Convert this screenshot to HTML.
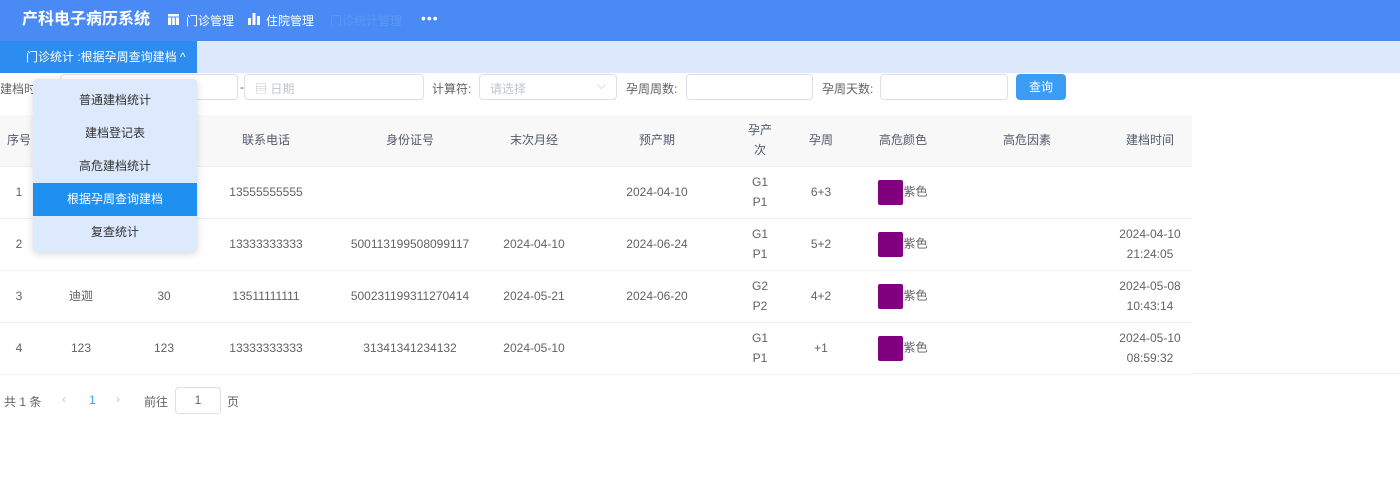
<!DOCTYPE html>
<html><head><meta charset="utf-8"><style>
*{box-sizing:border-box;margin:0;padding:0}
body{width:1400px;height:492px;overflow:hidden;background:#fff;font-family:"Liberation Sans","Noto Sans CJK SC",sans-serif;font-size:12px;color:#606266;position:relative}
.hdr{position:absolute;left:0;top:0;width:1400px;height:41px;background:#4a8af4;color:#fff}
.abs{position:absolute}
.tabs{position:absolute;left:0;top:41px;width:1400px;height:32px;background:#dce8fc}
.tab{position:absolute;left:0;top:0;width:197px;height:32px;background:#2d8cf0;color:#fff;font-size:12px;line-height:32px;padding-left:26px}
.inp{position:absolute;height:26px;border:1px solid #dcdfe6;border-radius:4px;background:#fff;top:74px}
.lbl{position:absolute;top:80px;font-size:12px;color:#606266}
table{position:absolute;left:0;top:115px;border-collapse:collapse;table-layout:fixed;width:1192px}
th{height:51px;background:#f8f8f9;font-weight:normal;color:#515a6e;font-size:12px;text-align:center;border-bottom:1px solid #ebeef5;line-height:20px}
td{height:52px;text-align:center;border-bottom:1px solid #ebeef5;font-size:12px;color:#606266;line-height:20px}
.sw{display:inline-block;width:25px;height:25px;background:#800080;border-radius:2px;vertical-align:middle}
.dd{position:absolute;left:33px;top:79px;width:164px;height:173px;background:#dde9fc;border-radius:4px;box-shadow:0 2px 8px rgba(0,0,0,.15);padding-top:5px}
.dd div{height:33px;line-height:33px;text-align:center;color:#333;font-size:12px}
.dd .on{background:#1e90f0;color:#fff}
</style></head><body>
<div class="hdr">
 <div class="abs" style="left:22px;top:10px;font-size:16px;font-weight:bold;line-height:20px">产科电子病历系统</div>
 <svg class="abs" style="left:168px;top:14px" width="11" height="11"><rect width="11" height="11" fill="#fff"/><rect x="3.2" y="3" width="1" height="8" fill="#4a8af4"/><rect x="6.8" y="3" width="1" height="8" fill="#4a8af4"/><rect x="0" y="2.5" width="11" height="1" fill="#4a8af4"/></svg>
 <div class="abs" style="left:186px;top:12px;font-size:12px">门诊管理</div>
 <svg class="abs" style="left:248px;top:12px" width="12" height="13"><rect x="0" y="6" width="3" height="7" fill="#fff"/><rect x="4.5" y="1" width="3" height="12" fill="#fff"/><rect x="9" y="4" width="3" height="9" fill="#fff"/></svg>
 <div class="abs" style="left:266px;top:12px;font-size:12px">住院管理</div>
 <div class="abs" style="left:330px;top:12px;font-size:12px;color:#5b98f6">门诊统计管理</div>
 <div class="abs" style="left:421px;top:10px;font-size:14px;letter-spacing:1px">•••</div>
</div>
<div class="tabs"><div class="tab">门诊统计 :根据孕周查询建档 ^</div></div>
<div class="lbl" style="left:0">建档时间</div>
<div class="inp" style="left:60px;width:178px"></div>
<div class="lbl" style="left:240px">-</div>
<div class="inp" style="left:244px;width:180px"><span style="position:absolute;left:10px;top:5px;color:#c0c4cc">▤ 日期</span></div>
<div class="lbl" style="left:432px">计算符:</div>
<div class="inp" style="left:479px;width:138px"><span style="position:absolute;left:10px;top:5px;color:#c0c4cc">请选择</span><span style="position:absolute;right:10px;top:3px;color:#c0c4cc">⌵</span></div>
<div class="lbl" style="left:626px">孕周周数:</div>
<div class="inp" style="left:686px;width:127px"></div>
<div class="lbl" style="left:822px">孕周天数:</div>
<div class="inp" style="left:880px;width:128px"></div>
<div class="abs" style="left:1016px;top:74px;width:50px;height:26px;background:#3a9cf4;border-radius:4px;color:#fff;line-height:26px;text-align:center">查询</div>
<table>
<colgroup><col style="width:38px"><col style="width:86px"><col style="width:80px"><col style="width:124px"><col style="width:164px"><col style="width:84px"><col style="width:162px"><col style="width:44px"><col style="width:78px"><col style="width:86px"><col style="width:162px"><col style="width:84px"></colgroup>
<tr><th>序号</th><th>姓名</th><th>年龄</th><th>联系电话</th><th>身份证号</th><th>末次月经</th><th>预产期</th><th>孕产<br>次</th><th>孕周</th><th>高危颜色</th><th>高危因素</th><th>建档时间</th></tr>
<tr><td>1</td><td></td><td></td><td>13555555555</td><td></td><td></td><td>2024-04-10</td><td>G1<br>P1</td><td>6+3</td><td><span class="sw"></span>紫色</td><td></td><td></td></tr>
<tr><td>2</td><td></td><td></td><td>13333333333</td><td>500113199508099117</td><td>2024-04-10</td><td>2024-06-24</td><td>G1<br>P1</td><td>5+2</td><td><span class="sw"></span>紫色</td><td></td><td>2024-04-10<br>21:24:05</td></tr>
<tr><td>3</td><td>迪迦</td><td>30</td><td>13511111111</td><td>500231199311270414</td><td>2024-05-21</td><td>2024-06-20</td><td>G2<br>P2</td><td>4+2</td><td><span class="sw"></span>紫色</td><td></td><td>2024-05-08<br>10:43:14</td></tr>
<tr><td>4</td><td>123</td><td>123</td><td>13333333333</td><td>31341341234132</td><td>2024-05-10</td><td></td><td>G1<br>P1</td><td>+1</td><td><span class="sw"></span>紫色</td><td></td><td>2024-05-10<br>08:59:32</td></tr>
</table>
<div class="abs" style="left:1192px;top:373px;width:208px;height:1px;background:#ebeef5"></div>
<div class="abs" style="left:4px;top:393px">共 1 条</div>
<div class="abs" style="left:62px;top:392px;color:#c0c4cc">‹</div>
<div class="abs" style="left:89px;top:393px;color:#409eff">1</div>
<div class="abs" style="left:116px;top:392px;color:#c0c4cc">›</div>
<div class="abs" style="left:144px;top:393px">前往</div>
<div class="abs" style="left:175px;top:387px;width:46px;height:27px;border:1px solid #dcdfe6;border-radius:4px;text-align:center;line-height:25px">1</div>
<div class="abs" style="left:227px;top:393px">页</div>
<div class="dd"><div>普通建档统计</div><div>建档登记表</div><div>高危建档统计</div><div class="on">根据孕周查询建档</div><div>复查统计</div></div>
</body></html>
